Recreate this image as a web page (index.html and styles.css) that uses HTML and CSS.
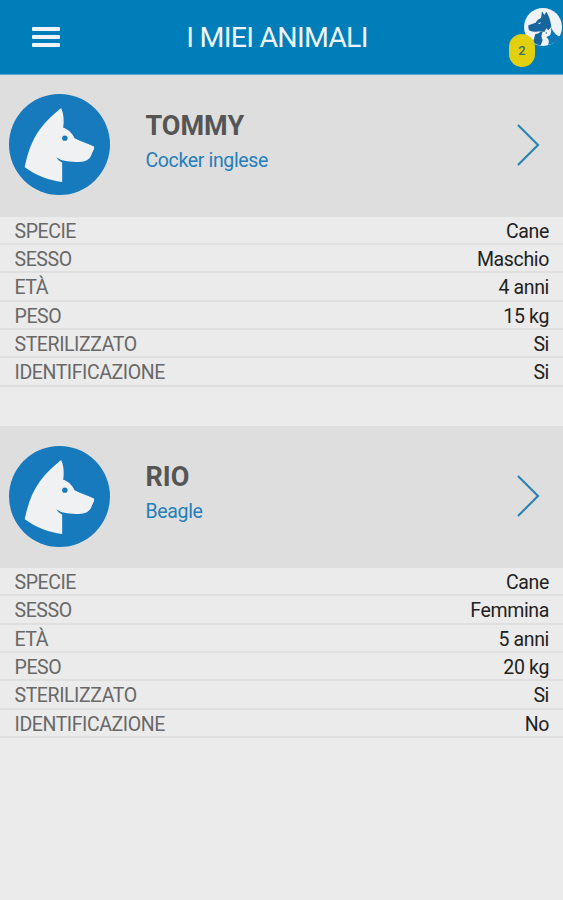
FILE: index.html
```
<!DOCTYPE html>
<html lang="it">
<head>
  <meta charset="utf-8">
  <title>I miei animali</title>
  <link rel="stylesheet" href="styles.css">
</head>
<body>
  <!-- shared icons -->
  <svg class="icon-defs" width="0" height="0">
    <symbol id="dog" viewBox="27 28 302 302">
      <circle cx="178" cy="179" r="151" fill="#167abd"/>
      <path d="M183 70 C191 88 192 108 189 129 C203 133 216 145 223 160 C241 170 264 176 281 185 C284 192 276 201 273 211 C268 224 255 231 236 231 C210 231 183 229 168 217 C172 224 178 228 186 233 L186 291 C145 286 107 271 74 247 C83 202 96 166 119 134 C139 107 162 87 183 70 Z" fill="#f0f1f2"/>
      <circle cx="194" cy="160" r="8" fill="#167abd"/>
    </symbol>
    <symbol id="arrow" viewBox="0 0 24 44">
      <path d="M2 2 L22 22 L2 42" fill="none" stroke="#2c86ae" stroke-width="2.2"/>
    </symbol>
  </svg>

  <header class="topbar">
    <button class="menu-btn" aria-label="Menu">
      <span></span>
      <span></span>
      <span></span>
    </button>
    <h1>I MIEI ANIMALI</h1>
    <div class="pets">
      <svg class="pets-icon" viewBox="93 23 114 114">
        <circle cx="150" cy="80" r="57" fill="#f0f3f6"/>
        <path d="M106 75 L128 67 C133 58 139 56 144 53 L147 33 L154 44 L160 34 C169 47 173 63 175 79 L166 90 L160 84 L154 95 L145 93 C132 94 119 95 111 91 C106 89 106 84 106 75 Z" fill="#17659e"/>
        <path d="M127 101 C134 101 140 98 144 93 L149 94 C145 103 144 112 149 119 L143 135 C134 134 127 131 120 126 Z" fill="#17659e"/>
        <path d="M174 80 C181 97 191 106 202 109 C194 121 181 130 165 134 C170 124 168 117 160 110 L171 105 C175 98 175 89 174 80 Z" fill="#0b79b8"/>
        <path d="M135 69 L144 66 L140 72 Z" fill="#f0f3f6"/>
        <circle cx="160" cy="98" r="2" fill="#17659e"/>
      </svg>
      <span class="badge">2</span>
    </div>
  </header>

  <main>
    <section class="animal">
      <div class="animal-header">
        <svg class="avatar"><use href="#dog"/></svg>
        <div class="animal-title">
          <h2>TOMMY</h2>
          <p>Cocker inglese</p>
        </div>
        <svg class="arrow"><use href="#arrow"/></svg>
      </div>
      <dl class="details">
        <div class="row"><dt>SPECIE</dt><dd>Cane</dd></div>
        <div class="row"><dt>SESSO</dt><dd>Maschio</dd></div>
        <div class="row"><dt>ETÀ</dt><dd>4 anni</dd></div>
        <div class="row"><dt>PESO</dt><dd>15 kg</dd></div>
        <div class="row"><dt>STERILIZZATO</dt><dd>Si</dd></div>
        <div class="row"><dt>IDENTIFICAZIONE</dt><dd>Si</dd></div>
      </dl>
    </section>

    <section class="animal">
      <div class="animal-header">
        <svg class="avatar"><use href="#dog"/></svg>
        <div class="animal-title">
          <h2>RIO</h2>
          <p>Beagle</p>
        </div>
        <svg class="arrow"><use href="#arrow"/></svg>
      </div>
      <dl class="details">
        <div class="row"><dt>SPECIE</dt><dd>Cane</dd></div>
        <div class="row"><dt>SESSO</dt><dd>Femmina</dd></div>
        <div class="row"><dt>ETÀ</dt><dd>5 anni</dd></div>
        <div class="row"><dt>PESO</dt><dd>20 kg</dd></div>
        <div class="row"><dt>STERILIZZATO</dt><dd>Si</dd></div>
        <div class="row"><dt>IDENTIFICAZIONE</dt><dd>No</dd></div>
      </dl>
    </section>
  </main>
</body>
</html>
```
FILE: styles.css
```
* {
  box-sizing: border-box;
}

body {
  margin: 0;
  min-height: 100vh;
  background-color: #ebebeb;
  font-family: Roboto, sans-serif;
  overflow-x: hidden;
}

h1, h2, p, dl, dd {
  margin: 0;
}

.icon-defs {
  position: absolute;
}

.topbar {
  display: grid;
  grid-template-columns: 100px 1fr 100px;
  align-items: center;
  height: 75px;
  background-color: #007eba;
  border-bottom: 1px solid #5fa9cf;
}

.topbar h1 {
  color: #eef4fa;
  font-size: 28.5px;
  font-weight: 400;
  letter-spacing: -0.75px;
  line-height: 34px;
  text-align: center;
  white-space: nowrap;
  padding: 2px 9px 0 0;
}

.menu-btn {
  display: flex;
  flex-direction: column;
  gap: 4px;
  width: 28px;
  margin-left: 32px;
  padding: 0;
  border: none;
  background: none;
}

.menu-btn span {
  height: 4px;
  border-radius: 1px;
  background-color: #eef4fa;
}

.pets {
  position: relative;
  justify-self: end;
  align-self: start;
  width: 39px;
  height: 38px;
  margin-top: 8px;
}

.pets-icon {
  display: block;
  width: 38px;
  height: 38px;
}

.badge {
  position: absolute;
  top: 26px;
  left: -15px;
  width: 26px;
  height: 33px;
  border-radius: 13px;
  background-color: #e2d00f;
  color: #3b6f68;
  font-size: 13px;
  font-weight: 500;
  line-height: 34px;
  text-align: center;
}

.animal {
  margin-bottom: 39.6px;
}

.animal-header {
  display: flex;
  align-items: center;
  height: 141.7px;
  padding: 0 23px 2px 9px;
  background-color: #dedede;
}

.avatar {
  width: 101px;
  height: 101px;
}

.animal-title {
  flex: 1;
  margin-left: 35.5px;
  padding-bottom: 8px;
}

.animal-title h2 {
  color: #555;
  font-size: 27px;
  font-weight: 700;
  line-height: 36px;
}

.animal-title p {
  color: #247fba;
  font-size: 19.5px;
  line-height: 26px;
  letter-spacing: -0.35px;
  margin-top: 4px;
}

.arrow {
  width: 24px;
  height: 44px;
}

.row {
  display: flex;
  justify-content: space-between;
  height: 28.35px;
  padding: 0 14px 0 14.5px;
  border-bottom: 2px solid #dfdfdf;
  font-size: 19.5px;
  letter-spacing: -0.35px;
  line-height: 29.5px;
}

.row dt {
  color: #686868;
  letter-spacing: -0.42px;
}

.row dd {
  color: #222;
}
```
